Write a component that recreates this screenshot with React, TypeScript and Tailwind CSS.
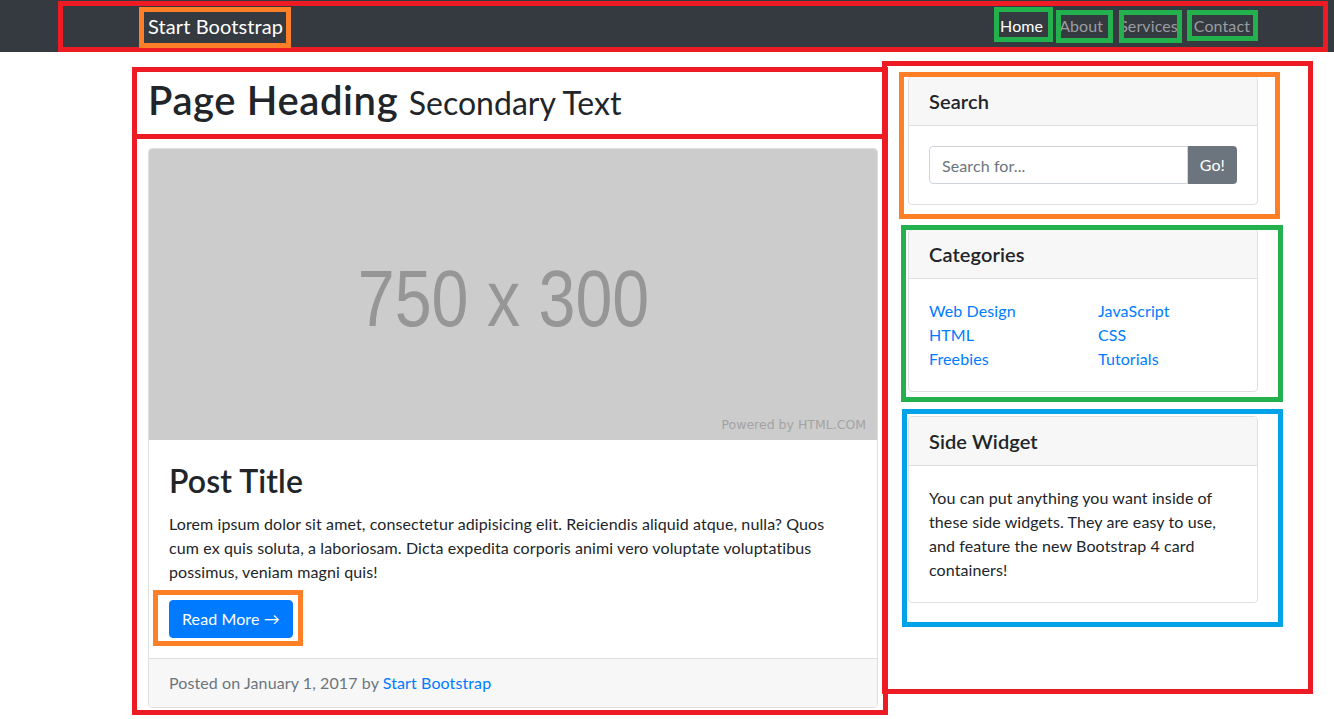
import React from "react";

const navLinks = ["Home", "About", "Services", "Contact"];
const catLeft = ["Web Design", "HTML", "Freebies"];
const catRight = ["JavaScript", "CSS", "Tutorials"];

const Card = ({ title, children }: { title: string; children: React.ReactNode }) => (
  <div className="border border-[#dfdfdf] rounded-[4px] overflow-hidden">
    <div className="bg-[#f7f7f7] border-b border-[#dfdfdf] px-5 py-3">
      <h5 className="text-[20px] leading-6 font-semibold">{title}</h5>
    </div>
    <div className="p-5">{children}</div>
  </div>
);

// paint-style highlight boxes drawn over the screenshot
const Marks = () => (
  <div className="pointer-events-none absolute inset-0">
    <div className="absolute left-[58px] top-[1px] w-[1270px] h-[51px] border-[5px] border-[#ed1c24]" />
    <div className="absolute left-[139px] top-[7px] w-[152px] h-[41px] border-[5px] border-[#ff7f27]" />
    <div className="absolute left-[994px] top-[7px] w-[59px] h-[35px] border-[5px] border-[#22b14c]" />
    <div className="absolute left-[1056px] top-[10px] w-[57px] h-[33px] border-[5px] border-[#22b14c]" />
    <div className="absolute left-[1119px] top-[10px] w-[63px] h-[33px] border-[5px] border-[#22b14c]" />
    <div className="absolute left-[1187px] top-[10px] w-[71px] h-[31px] border-[5px] border-[#22b14c]" />
    <div className="absolute left-[132px] top-[67px] w-[756px] h-[72px] border-[5px] border-[#ed1c24]" />
    <div className="absolute left-[132px] top-[134px] w-[756px] h-[581px] border-[5px] border-[#ed1c24]" />
    <div className="absolute left-[153px] top-[590px] w-[150px] h-[56px] border-[5px] border-[#ff7f27]" />
    <div className="absolute left-[882px] top-[61px] w-[431px] h-[633px] border-[5px] border-[#ed1c24]" />
    <div className="absolute left-[899px] top-[72px] w-[381px] h-[147px] border-[5px] border-[#ff7f27]" />
    <div className="absolute left-[901px] top-[225px] w-[382px] h-[177px] border-[5px] border-[#22b14c]" />
    <div className="absolute left-[902px] top-[409px] w-[381px] h-[218px] border-[5px] border-[#00a2e8]" />
  </div>
);

export default function App() {
  return (
    <div className="relative w-[1334px] h-[719px] overflow-hidden bg-white text-[#212529] text-[16px] leading-6 tracking-[0.1px] font-['Lato',sans-serif]">
      <nav className="bg-[#343a40] h-[52px]">
        <div className="ml-[133px] w-[1140px] px-[15px] h-full flex items-center justify-between">
          <a className="text-white text-[20px] leading-[30px]">Start Bootstrap</a>
          <ul className="flex">
            {navLinks.map((l, i) => (
              <li key={l}>
                <a className={`block px-2 py-2 ${i === 0 ? "text-white" : "text-[#9a9da0]"}`}>{l}</a>
              </li>
            ))}
          </ul>
        </div>
      </nav>

      <div className="ml-[133px] w-[1140px] flex">
        <div className="w-[760px] shrink-0 px-[15px]">
          <h1 className="my-6 h-[48px] text-[40px] leading-[48px] font-semibold tracking-[0.6px]">
            Page Heading{" "}
            <small className="text-[32px] leading-none font-normal tracking-normal">Secondary Text</small>
          </h1>

          <div className="border border-[#dfdfdf] rounded-[4px] overflow-hidden">
            <div className="relative h-[291px] bg-[#cccccc] flex items-center justify-center pt-[8px] pr-[18px]">
              <span className="font-['Liberation_Sans',sans-serif] text-[79px] leading-none tracking-normal text-[#969696] scale-x-[0.84]">
                750 x 300
              </span>
              <span className="absolute right-[11px] bottom-[6px] font-['DejaVu_Sans',sans-serif] text-[12.5px] leading-[18px] tracking-normal text-[#a3a3a3]">
                Powered by HTML.COM
              </span>
            </div>
            <div className="p-5 pt-[22px]">
              <h2 className="text-[32px] leading-[38px] font-semibold mb-3">Post Title</h2>
              <p className="mb-4">
                Lorem ipsum dolor sit amet, consectetur adipisicing elit. Reiciendis aliquid atque, nulla? Quos cum ex
                quis soluta, a laboriosam. Dicta expedita corporis animi vero voluptate voluptatibus possimus, veniam
                magni quis!
              </p>
              <a className="inline-block bg-[#007bff] border border-[#007bff] text-white px-3 py-1.5 rounded-[4px]">
                Read More &rarr;
              </a>
            </div>
            <div className="bg-[#f7f7f7] border-t border-[#dfdfdf] px-5 py-3 text-[#6c757d]">
              Posted on January 1, 2017 by <a className="text-[#007bff]">Start Bootstrap</a>
            </div>
          </div>
        </div>

        <div className="w-[380px] shrink-0 px-[15px] pt-6 flex flex-col gap-6">
          <Card title="Search">
            <div className="flex">
              <input
                className="flex-1 min-w-0 h-[38px] border border-[#ced4da] rounded-l-[4px] px-3 placeholder:text-[#6c757d] outline-none"
                placeholder="Search for..."
              />
              <button className="h-[38px] bg-[#6c757d] text-white px-3 rounded-r-[4px]">Go!</button>
            </div>
          </Card>

          <Card title="Categories">
            <div className="grid grid-cols-2 gap-x-[30px]">
              {[catLeft, catRight].map((col, i) => (
                <ul key={i}>
                  {col.map((c) => (
                    <li key={c}>
                      <a className="text-[#007bff]">{c}</a>
                    </li>
                  ))}
                </ul>
              ))}
            </div>
          </Card>

          <Card title="Side Widget">
            You can put anything you want inside of these side widgets. They are easy to use, and feature the new
            Bootstrap 4 card containers!
          </Card>
        </div>
      </div>

      <Marks />
    </div>
  );
}
